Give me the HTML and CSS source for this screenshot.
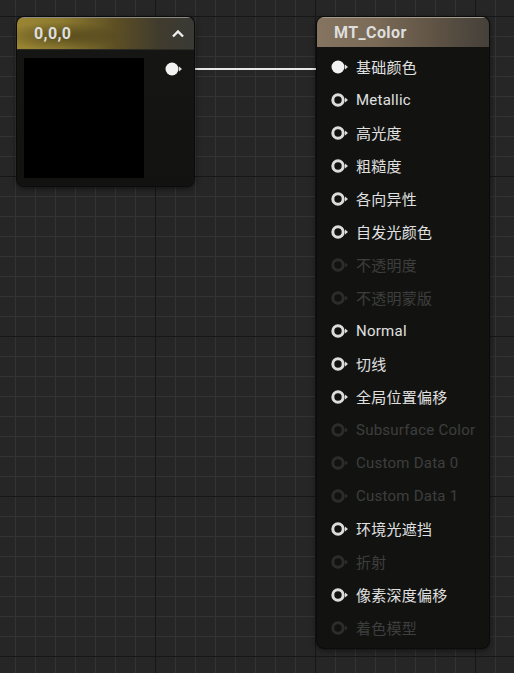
FILE: index.html
```html
<!DOCTYPE html>
<html>
<head>
<meta charset="utf-8">
<link rel="stylesheet" href="styles.css">
</head>
<body>
<div class="canvas">
  <svg class="wire" width="514" height="673"><path d="M180 69 L333 69" stroke="#e8e8e8" stroke-width="2" fill="none"/></svg>

  <div class="node const">
    <div class="head gold">
      <span class="title">0,0,0</span>
      <svg class="chev" width="14" height="9" viewBox="0 0 14 9"><path d="M2 7.5 L7 2.5 L12 7.5" stroke="#eee" stroke-width="2.4" fill="none"/></svg>
    </div>
    <div class="cbody">
      <div class="preview"></div>
      <svg class="outpin" width="20" height="16" viewBox="0 0 20 16"><circle cx="8" cy="8" r="6.5" fill="#f2f2f2"/><path d="M15 5.5 L18 8 L15 10.5 Z" fill="#ddd"/></svg>
    </div>
  </div>

  <div class="node mat">
    <div class="head brown"><span class="title">MT_Color</span></div>
    <div class="pins">
      <div class="pin"><svg class="pi" width="20" height="16" viewBox="0 0 20 16"><circle cx="8" cy="8" r="6.5" fill="#f2f2f2"/><path d="M15 5.5 L18 8 L15 10.5 Z" fill="#ddd"/></svg><span>基础颜色</span></div>
      <div class="pin"><svg class="pi" width="20" height="16" viewBox="0 0 20 16"><circle cx="8" cy="8" r="5.2" fill="none" stroke="#dcdcdc" stroke-width="3"/><path d="M15 5.5 L18 8 L15 10.5 Z" fill="#ddd"/></svg><span>Metallic</span></div>
      <div class="pin"><svg class="pi" width="20" height="16" viewBox="0 0 20 16"><circle cx="8" cy="8" r="5.2" fill="none" stroke="#dcdcdc" stroke-width="3"/><path d="M15 5.5 L18 8 L15 10.5 Z" fill="#ddd"/></svg><span>高光度</span></div>
      <div class="pin"><svg class="pi" width="20" height="16" viewBox="0 0 20 16"><circle cx="8" cy="8" r="5.2" fill="none" stroke="#dcdcdc" stroke-width="3"/><path d="M15 5.5 L18 8 L15 10.5 Z" fill="#ddd"/></svg><span>粗糙度</span></div>
      <div class="pin"><svg class="pi" width="20" height="16" viewBox="0 0 20 16"><circle cx="8" cy="8" r="5.2" fill="none" stroke="#dcdcdc" stroke-width="3"/><path d="M15 5.5 L18 8 L15 10.5 Z" fill="#ddd"/></svg><span>各向异性</span></div>
      <div class="pin"><svg class="pi" width="20" height="16" viewBox="0 0 20 16"><circle cx="8" cy="8" r="5.2" fill="none" stroke="#dcdcdc" stroke-width="3"/><path d="M15 5.5 L18 8 L15 10.5 Z" fill="#ddd"/></svg><span>自发光颜色</span></div>
      <div class="pin off"><svg class="pi" width="20" height="16" viewBox="0 0 20 16"><circle cx="8" cy="8" r="5.2" fill="none" stroke="#2c2c2c" stroke-width="3"/><path d="M15 5.5 L18 8 L15 10.5 Z" fill="#2c2c2c"/></svg><span>不透明度</span></div>
      <div class="pin off"><svg class="pi" width="20" height="16" viewBox="0 0 20 16"><circle cx="8" cy="8" r="5.2" fill="none" stroke="#2c2c2c" stroke-width="3"/><path d="M15 5.5 L18 8 L15 10.5 Z" fill="#2c2c2c"/></svg><span>不透明蒙版</span></div>
      <div class="pin"><svg class="pi" width="20" height="16" viewBox="0 0 20 16"><circle cx="8" cy="8" r="5.2" fill="none" stroke="#dcdcdc" stroke-width="3"/><path d="M15 5.5 L18 8 L15 10.5 Z" fill="#ddd"/></svg><span>Normal</span></div>
      <div class="pin"><svg class="pi" width="20" height="16" viewBox="0 0 20 16"><circle cx="8" cy="8" r="5.2" fill="none" stroke="#dcdcdc" stroke-width="3"/><path d="M15 5.5 L18 8 L15 10.5 Z" fill="#ddd"/></svg><span>切线</span></div>
      <div class="pin"><svg class="pi" width="20" height="16" viewBox="0 0 20 16"><circle cx="8" cy="8" r="5.2" fill="none" stroke="#dcdcdc" stroke-width="3"/><path d="M15 5.5 L18 8 L15 10.5 Z" fill="#ddd"/></svg><span>全局位置偏移</span></div>
      <div class="pin off"><svg class="pi" width="20" height="16" viewBox="0 0 20 16"><circle cx="8" cy="8" r="5.2" fill="none" stroke="#2c2c2c" stroke-width="3"/><path d="M15 5.5 L18 8 L15 10.5 Z" fill="#2c2c2c"/></svg><span>Subsurface Color</span></div>
      <div class="pin off"><svg class="pi" width="20" height="16" viewBox="0 0 20 16"><circle cx="8" cy="8" r="5.2" fill="none" stroke="#2c2c2c" stroke-width="3"/><path d="M15 5.5 L18 8 L15 10.5 Z" fill="#2c2c2c"/></svg><span>Custom Data 0</span></div>
      <div class="pin off"><svg class="pi" width="20" height="16" viewBox="0 0 20 16"><circle cx="8" cy="8" r="5.2" fill="none" stroke="#2c2c2c" stroke-width="3"/><path d="M15 5.5 L18 8 L15 10.5 Z" fill="#2c2c2c"/></svg><span>Custom Data 1</span></div>
      <div class="pin"><svg class="pi" width="20" height="16" viewBox="0 0 20 16"><circle cx="8" cy="8" r="5.2" fill="none" stroke="#dcdcdc" stroke-width="3"/><path d="M15 5.5 L18 8 L15 10.5 Z" fill="#ddd"/></svg><span>环境光遮挡</span></div>
      <div class="pin off"><svg class="pi" width="20" height="16" viewBox="0 0 20 16"><circle cx="8" cy="8" r="5.2" fill="none" stroke="#2c2c2c" stroke-width="3"/><path d="M15 5.5 L18 8 L15 10.5 Z" fill="#2c2c2c"/></svg><span>折射</span></div>
      <div class="pin"><svg class="pi" width="20" height="16" viewBox="0 0 20 16"><circle cx="8" cy="8" r="5.2" fill="none" stroke="#dcdcdc" stroke-width="3"/><path d="M15 5.5 L18 8 L15 10.5 Z" fill="#ddd"/></svg><span>像素深度偏移</span></div>
      <div class="pin off"><svg class="pi" width="20" height="16" viewBox="0 0 20 16"><circle cx="8" cy="8" r="5.2" fill="none" stroke="#2c2c2c" stroke-width="3"/><path d="M15 5.5 L18 8 L15 10.5 Z" fill="#2c2c2c"/></svg><span>着色模型</span></div>
    </div>
  </div>
</div>
</body>
</html>
```

FILE: styles.css
```css
html, body {
  margin: 0;
  padding: 0;
  width: 514px;
  height: 673px;
  overflow: hidden;
}
body {
  font-family: Roboto, "Noto Sans CJK SC", sans-serif;
}
.canvas {
  position: relative;
  width: 514px;
  height: 673px;
  background-color: #262626;
  background-image:
    linear-gradient(to right, #171717 1px, transparent 1px),
    linear-gradient(to bottom, #171717 1px, transparent 1px),
    linear-gradient(to right, #333333 1px, transparent 1px),
    linear-gradient(to bottom, #333333 1px, transparent 1px);
  background-size: 160px 160px, 160px 160px, 20px 20px, 20px 20px;
  background-position: 155px 16px, 155px 16px, 15px 16px, 15px 16px;
}
.wire {
  position: absolute;
  left: 0;
  top: 0;
}
.node {
  position: absolute;
  background: #121311;
  border-radius: 7px;
  box-shadow: 0 0 0 1px #0b0b0b, 0 2px 6px rgba(0,0,0,0.6);
  overflow: hidden;
}
.const {
  left: 17px;
  top: 17px;
  width: 177px;
  height: 169px;
  background: linear-gradient(to bottom, #161715, #121311);
}
.mat {
  left: 317px;
  top: 17px;
  width: 172px;
  height: 631px;
  background: #121311;
}
.head {
  display: flex;
  align-items: center;
  justify-content: space-between;
  box-sizing: border-box;
  border-top: 1px solid #8a8a80;
}
.gold {
  height: 33px;
  padding: 0 9px 0 17px;
  background:
    radial-gradient(ellipse 60px 14px at 45px 18px, rgba(40,34,10,0.5), transparent),
    linear-gradient(to right, #9a8533 0%, #8e7b30 25%, #5e5024 55%, #403b2d 80%, #3a3935 100%);
  border-bottom: 1px solid #2a2a24;
}
.brown {
  height: 30px;
  padding: 0 14px 0 17px;
  background: linear-gradient(to right, #85745f 0%, #7a6a56 35%, #5d5244 70%, #45403a 100%);
  border-top-color: #a49a8c;
}
.title {
  color: #dedede;
  font-weight: 700;
  font-size: 16px;
  letter-spacing: 0.4px;
}
.chev {
  display: block;
}
.cbody {
  display: flex;
  align-items: flex-start;
  padding: 8px 0 0 7px;
  gap: 20px;
}
.preview {
  width: 120px;
  height: 120px;
  background: #000;
}
.outpin {
  display: block;
  margin-top: 3px;
}
.pins {
  display: flex;
  flex-direction: column;
  padding: 3px 0 0 13px;
}
.pin {
  height: 33px;
  display: flex;
  align-items: center;
  gap: 6px;
  color: #e0e0e0;
  font-size: 15px;
  letter-spacing: 0.25px;
}
.pin .pi {
  display: block;
  flex: none;
}
.pin.off {
  color: #3e3e3e;
}
```
